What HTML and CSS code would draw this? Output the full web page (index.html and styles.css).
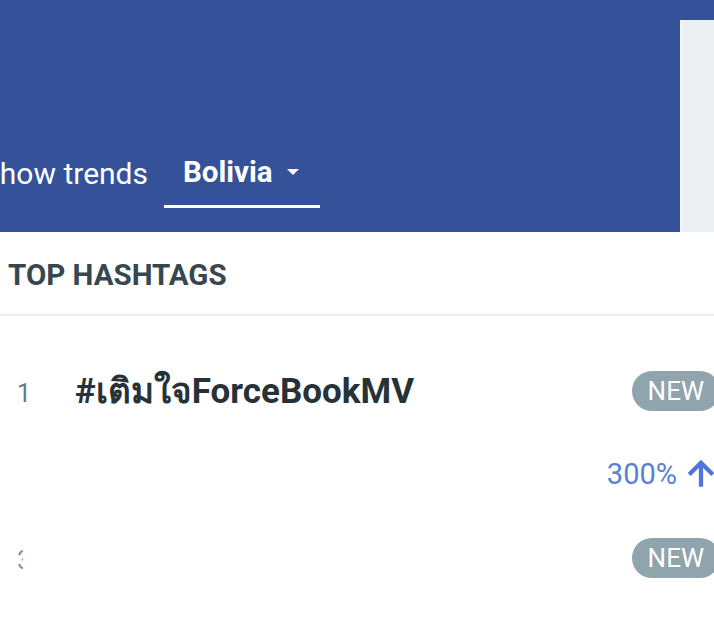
FILE: index.html
```html
<!DOCTYPE html>
<html lang="en">
<head>
<meta charset="utf-8">
<title>Trends</title>
<link rel="stylesheet" href="styles.css">
</head>
<body>
<div class="page">
  <header class="topbar">
    <nav class="tabs">
      <a class="tab">Show trends</a>
      <a class="tab active">Bolivia <span class="caret"></span></a>
    </nav>
    <aside class="side"></aside>
  </header>
  <section class="card">
    <h2 class="card-title">TOP HASHTAGS</h2>
    <ul class="list">
      <li class="row">
        <span class="rank">1</span>
        <span class="tag">#เติมใจForceBookMV</span>
        <span class="badge">NEW</span>
      </li>
      <li class="row">
        <span class="rank"></span>
        <span class="tag"></span>
        <span class="change">300%
          <svg class="arrow" viewBox="0 0 28 28" width="30" height="30"><path d="M14 26V4M3 14.5L14 3.5l11 11" fill="none" stroke="currentColor" stroke-width="4" stroke-linejoin="miter"/></svg>
        </span>
      </li>
      <li class="row">
        <span class="rank"><span class="rank-clip">3</span></span>
        <span class="tag"></span>
        <span class="badge">NEW</span>
      </li>
    </ul>
  </section>
</div>
</body>
</html>
```
FILE: styles.css
```css
html, body {
  margin: 0;
  padding: 0;
  background: #ffffff;
  overflow: hidden;
}
body {
  font-family: Roboto, "Noto Sans", "Liberation Sans", sans-serif;
  width: 714px;
  height: 617px;
}
.page {
  width: 726px;
}
.topbar {
  display: flex;
  height: 232px;
  background: #34519a;
}
.tabs {
  flex: 1;
  display: flex;
  align-items: flex-end;
  margin-left: -18px;
  padding-bottom: 24px;
}
.tab {
  display: flex;
  align-items: center;
  color: #ffffff;
  font-size: 30px;
  height: 70px;
  padding: 0 16px 0 0;
  box-sizing: border-box;
}
.tab.active {
  font-weight: 700;
  font-size: 29.5px;
  padding: 0 21px 0 19px;
  border-bottom: 3px solid #ffffff;
  gap: 14px;
}
.caret {
  width: 0;
  height: 0;
  border-left: 6px solid transparent;
  border-right: 6px solid transparent;
  border-top: 6px solid #ffffff;
}
.side {
  width: 44px;
  margin-top: 20px;
  background: #eceff1;
  border-left: 2px solid #f3f5f6;
}
.card-title {
  margin: 0;
  padding: 3px 8px 0;
  height: 79px;
  display: flex;
  align-items: center;
  font-size: 29.5px;
  font-weight: 700;
  color: #37474f;
  border-bottom: 2px solid #eceeef;
}
.list {
  list-style: none;
  margin: 0;
  padding: 33px 0 0 0;
}
.row {
  display: flex;
  align-items: center;
  height: 83.5px;
}
.rank {
  width: 58px;
  padding-left: 17px;
  padding-top: 5px;
  font-size: 25px;
  color: #607d8b;
}
.rank-clip {
  display: inline-block;
  width: 6px;
  overflow: hidden;
  vertical-align: bottom;
  opacity: 0.8;
}
.tag {
  flex: 1;
  font-size: 35px;
  font-weight: 700;
  color: #263238;
}
.badge {
  background: #90a4ae;
  color: #ffffff;
  font-size: 26px;
  height: 40px;
  border-radius: 20px;
  padding: 0 16px;
  display: flex;
  align-items: center;
  margin-right: 6px;
}
.change {
  display: flex;
  align-items: center;
  gap: 9px;
  font-size: 29px;
  color: #5b7fd3;
  margin-right: 10px;
}
.arrow {
  color: #4f74dd;
}
```
